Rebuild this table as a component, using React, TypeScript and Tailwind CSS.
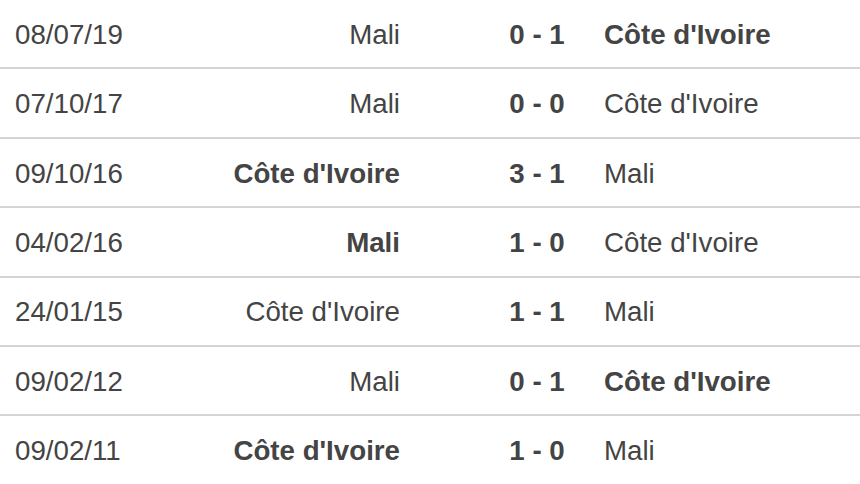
import React from "react";

type Match = {
  date: string;
  home: string;
  away: string;
  score: string;
  winner: "home" | "away" | null;
};

const matches: Match[] = [
  { date: "08/07/19", home: "Mali", score: "0 - 1", away: "Côte d'Ivoire", winner: "away" },
  { date: "07/10/17", home: "Mali", score: "0 - 0", away: "Côte d'Ivoire", winner: null },
  { date: "09/10/16", home: "Côte d'Ivoire", score: "3 - 1", away: "Mali", winner: "home" },
  { date: "04/02/16", home: "Mali", score: "1 - 0", away: "Côte d'Ivoire", winner: "home" },
  { date: "24/01/15", home: "Côte d'Ivoire", score: "1 - 1", away: "Mali", winner: null },
  { date: "09/02/12", home: "Mali", score: "0 - 1", away: "Côte d'Ivoire", winner: "away" },
  { date: "09/02/11", home: "Côte d'Ivoire", score: "1 - 0", away: "Mali", winner: "home" },
];

function App() {
  return (
    <div className="w-[860px] h-[484px] bg-white text-[#444] text-[27.7px] font-['Liberation_Sans',Arial,sans-serif] overflow-hidden">
      {matches.map((m, i) => (
        <div
          key={i}
          className={
            i < matches.length - 1
              ? "flex items-center pt-[2px] h-[69.4px] border-b-2 border-[#d4d4d4]"
              : "flex items-center pt-[2px] h-[67px]"
          }
        >
          <div className="w-[200px] pl-[15px]">{m.date}</div>
          <div className={m.winner === "home" ? "w-[200px] text-right font-bold" : "w-[200px] text-right"}>
            {m.home}
          </div>
          <div className="w-[74px]" />
          <div className="w-[126px] text-center font-bold">{m.score}</div>
          <div className={m.winner === "away" ? "pl-[4px] font-bold" : "pl-[4px]"}>{m.away}</div>
        </div>
      ))}
    </div>
  );
}

export default App;
